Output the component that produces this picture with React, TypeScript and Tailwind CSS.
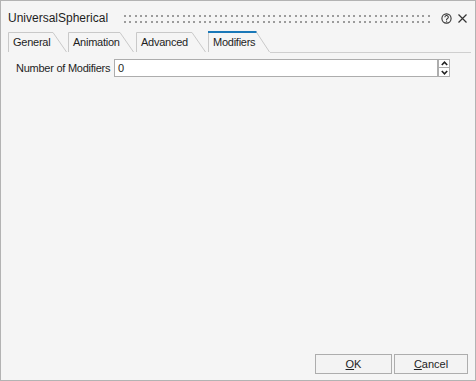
import React from "react";

type Tab = { label: string; width: number; active?: boolean };

const TABS: Tab[] = [
  { label: "General", width: 59 },
  { label: "Animation", width: 66 },
  { label: "Advanced", width: 70 },
  { label: "Modifiers", width: 62, active: true },
];

function TabItem({ label, width, active }: Tab) {
  const h = active ? 21 : 20;
  return (
    <div className="relative shrink-0 flex items-center pl-[5px] pt-[1px]" style={{ width, height: h }}>
      <svg className="absolute inset-0" width={width} height={h} viewBox={`0 0 ${width} ${h}`}>
        <polygon points={`0,${h} 0,0 ${width - 14},0 ${width},${h}`} fill="#f5f5f5" />
        <polyline
          points={`0.5,${h} 0.5,0.5 ${width - 14},0.5 ${width - 0.5},${h}`}
          fill="none"
          stroke="#c9c9c9"
          strokeWidth="1"
        />
        {active && <line x1="0" y1="1" x2={width - 13.5} y2="1" stroke="#1a78b8" strokeWidth="2" />}
      </svg>
      <span className="relative text-[11px] tracking-[-0.25px] leading-none">{label}</span>
    </div>
  );
}

// drag grip: two rows of small dots
function Grip() {
  return (
    <svg width="308" height="8" className="block" shapeRendering="crispEdges">
      {Array.from({ length: 58 }, (_, i) => {
        const x = Math.round(i * 5.33);
        return (
          <React.Fragment key={i}>
            <rect x={x} y="0" width="2" height="2" fill="#9c9c9c" />
            <rect x={x} y="6" width="2" height="2" fill="#9c9c9c" />
          </React.Fragment>
        );
      })}
    </svg>
  );
}

export default function App() {
  return (
    <div className="w-[476px] h-[381px] border border-[#b3b3b3] bg-[#f5f5f5] flex flex-col font-['Liberation_Sans',Arial,sans-serif] text-[#1e1e1e]">
      {/* title bar */}
      <div className="h-[30px] pt-[4px] flex items-center pl-[7px] pr-[8px]">
        <span className="w-[116px] text-[12px] leading-none">UniversalSpherical</span>
        <div className="flex-1 pt-[1px]">
          <Grip />
        </div>
        <svg width="11" height="11" viewBox="0 0 11 11" className="mr-[6px]">
          <circle cx="5.5" cy="5.5" r="4.6" fill="none" stroke="#333" strokeWidth="1.1" />
          <path d="M3.9,4.3 a1.7,1.7 0 1 1 2.4,1.5 c-0.5,0.25 -0.8,0.5 -0.8,1.1" fill="none" stroke="#333" strokeWidth="1.1" />
          <rect x="5" y="7.6" width="1.1" height="1.1" fill="#333" />
        </svg>
        <svg width="9" height="9" viewBox="0 0 9 9">
          <path d="M0.5,0.5 L8.5,8.5 M8.5,0.5 L0.5,8.5" stroke="#333" strokeWidth="1.2" />
        </svg>
      </div>

      {/* tabs */}
      <div className="h-[22px] flex items-start pl-[7px] pr-[4px]">
        <div className="flex items-end h-[21px] gap-[1px]">
          <TabItem {...TABS[0]} />
          <TabItem {...TABS[1]} />
        </div>
        <div className="flex items-end h-[21px] gap-[2px] ml-[2px]">
          <TabItem {...TABS[2]} />
          <TabItem {...TABS[3]} />
        </div>
        <div className="flex-1 h-[22px] border-b border-[#cfcfcf]" />
      </div>

      {/* content */}
      <div className="mt-[6px] pl-[15px] h-[18px] flex items-center">
        <span className="w-[98px] text-[11px] tracking-[-0.25px] leading-none">Number of Modifiers</span>
        <div className="w-[324px] h-[18px] border border-[#adadad] bg-white flex items-center pl-[3px]">
          <span className="text-[11px] leading-none">0</span>
        </div>
        <div className="w-[12px] h-[18px] flex flex-col">
          <div className="h-[9px] border border-[#adadad] bg-white flex items-center justify-center">
            <svg width="7" height="5" viewBox="0 0 7 5">
              <path d="M0.8,4 L3.5,1.2 L6.2,4" fill="none" stroke="#222" strokeWidth="1.6" />
            </svg>
          </div>
          <div className="h-[9px] border border-t-0 border-[#adadad] bg-white flex items-center justify-center">
            <svg width="7" height="5" viewBox="0 0 7 5">
              <path d="M0.8,1 L3.5,3.8 L6.2,1" fill="none" stroke="#222" strokeWidth="1.6" />
            </svg>
          </div>
        </div>
      </div>

      <div className="flex-1" />

      {/* buttons */}
      <div className="flex justify-end gap-[2px] pr-[7px] pb-[6px]">
        <button className="w-[77px] h-[20px] border border-[#adadad] bg-[#f3f3f3] text-[11px] leading-none">
          <span className="underline">O</span>K
        </button>
        <button className="w-[74px] h-[20px] border border-[#adadad] bg-[#f3f3f3] text-[11px] leading-none">
          <span className="underline">C</span>ancel
        </button>
      </div>
    </div>
  );
}
